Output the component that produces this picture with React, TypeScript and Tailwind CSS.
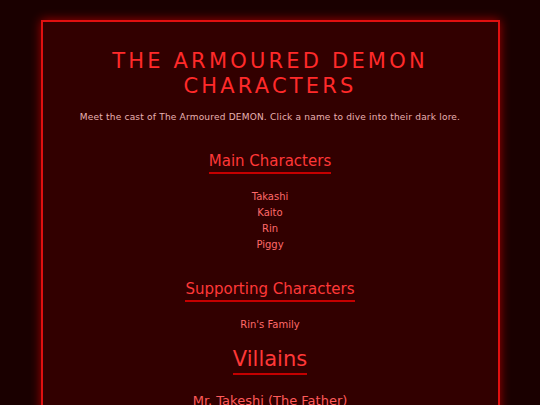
const mainCast = ['Takashi', 'Kaito', 'Rin', 'Piggy']

function SectionTitle({ children, big }: { children: string; big?: boolean }) {
  return (
    <h2
      className={`inline-block border-b-2 border-[#c40000] pb-px text-[#ff3838] ${
        big ? 'text-[21px] leading-[25px]' : 'text-[15px] leading-[20px]'
      }`}
    >
      {children}
    </h2>
  )
}

export default function App() {
  return (
    <div className="min-h-[405px] bg-[#1a0000] pt-[20px] font-['DejaVu_Sans',sans-serif]">
      <div className="mx-auto w-[85%] min-h-[420px] border-2 border-[#e01010] bg-[#320000] px-4 pt-[27px] text-center shadow-[0_0_10px_rgba(255,0,0,0.6)]">
        <h1 className="text-[21px] leading-[25px] tracking-[3.2px] text-[#ff2a2a] uppercase">
          The Armoured Demon
          <br />
          Characters
        </h1>

        <p className="mt-[11px] text-[9px] leading-[14px] tracking-[0.2px] text-[#e8b2b2]">
          Meet the cast of The Armoured DEMON. Click a name to dive into their dark lore.
        </p>

        <div className="mt-[25px]">
          <SectionTitle>Main Characters</SectionTitle>
        </div>
        <ul className="mt-[15px] flex flex-col items-center">
          {mainCast.map((n) => (
            <li key={n} className="text-[10px] leading-[16px] text-[#ff6a6a]">
              {n}
            </li>
          ))}
        </ul>

        <div className="mt-[24px]">
          <SectionTitle>Supporting Characters</SectionTitle>
        </div>
        <p className="mt-[15px] text-[10px] leading-[16px] text-[#ff6a6a]">Rin's Family</p>

        <div className="mt-[14px]">
          <SectionTitle big>Villains</SectionTitle>
        </div>
        <p className="mt-[18px] text-[13px] leading-[16px] text-[#ff5a5a]">Mr. Takeshi (The Father)</p>
      </div>
    </div>
  )
}
